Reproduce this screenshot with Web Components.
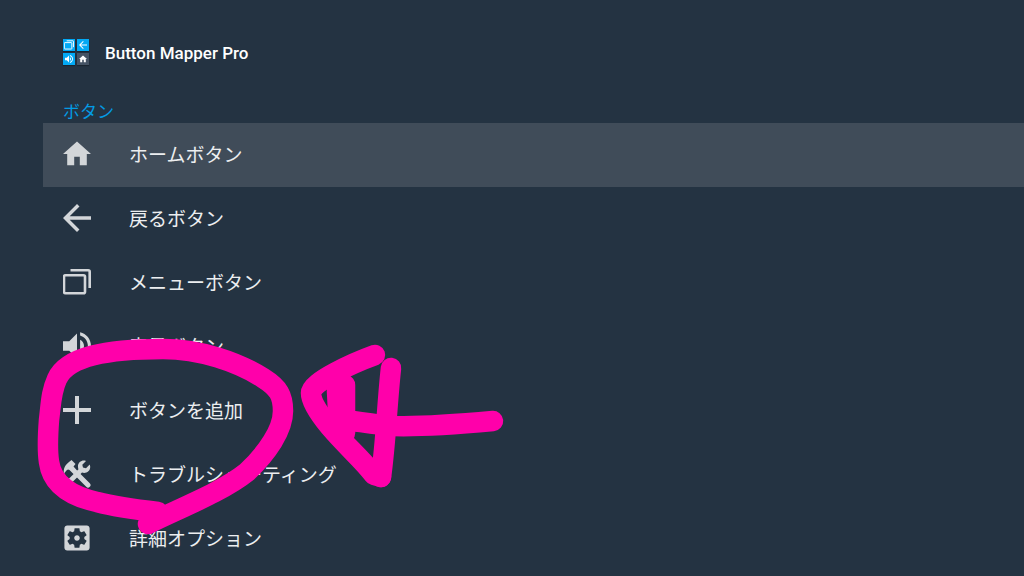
<!DOCTYPE html>
<html lang="ja">
<head>
<meta charset="utf-8">
<meta name="viewport" content="width=device-width, initial-scale=1">
<title>Button Mapper Pro</title>
<style>
    body {
        margin: 0;
        min-height: 100vh;
        background: #243342;
        color: #eceef0;
        font-family: Roboto, "Noto Sans CJK JP", sans-serif;
    }
</style>
</head>
<body>
<mapper-screen>
    <mapper-header slot="header">Button Mapper Pro</mapper-header>
    <menu-section label="ボタン">
        <menu-row icon="home" active>ホームボタン</menu-row>
        <menu-row icon="back">戻るボタン</menu-row>
        <menu-row icon="recent">メニューボタン</menu-row>
        <menu-row icon="volume">音量ボタン</menu-row>
        <menu-row icon="add">ボタンを追加</menu-row>
        <menu-row icon="tools">トラブルシューティング</menu-row>
        <menu-row icon="settings">詳細オプション</menu-row>
    </menu-section>
    <pen-marks slot="overlay"></pen-marks>
</mapper-screen>

<script>
const ICONS = {
    home: ['2 2 20 20', '<path d="M10 20v-6h4v6h5v-8h3L12 3 2 12h3v8z"/>'],
    back: ['4 4 16 16', '<path d="M20 11H7.83l5.59-5.59L12 4l-8 8 8 8 1.41-1.41L7.83 13H20v-2z"/>'],
    recent: ['0 0 28 28', '<g fill="none" stroke="currentColor" stroke-width="2.6"><rect x="1" y="7.3" width="21" height="18" rx="1.5"/><path d="M7.5 2.3H25.2a1.5 1.5 0 0 1 1.5 1.5V20"/></g>'],
    volume: ['3 3 18 18', '<path d="M3 9v6h4l5 5V4L7 9H3zm13.5 3c0-1.77-1.02-3.29-2.5-4.03v8.05c1.48-.73 2.5-2.25 2.5-4.02zM14 3.23v2.06c2.89.86 5 3.54 5 6.71s-2.11 5.85-5 6.71v2.06c4.01-.91 7-4.49 7-8.77s-2.99-7.86-7-8.77z"/>'],
    add: ['5 5 14 14', '<path d="M19 13h-6v6h-2v-6H5v-2h6V5h2v6h6v2z"/>'],
    tools: ['0 0 28 28', '<path d="M1 14C0 9 2 5 6 2L8.5 0l4 4-2 2.5 4 4.5-3.5 3.5L6.5 10 5 9.5c-2 1-3 2.5-4 4.5z"/><path d="M23 1c-4-1.5-8.500 1.500-8 6 0 1 .2 1.700.5 2.300L2 22.500c-2 2 1.500 5.500 3.500 3.500L19 12.500c4 1.500 8.500-1.500 8.200-6l-.5-2-3.700 3.700-3-.7-.7-2.800z"/><path d="M16 16l9 9" fill="none" stroke="currentColor" stroke-width="5" stroke-linecap="round"/>'],
    settings: ['2 2 20 20', '<path d="M12 10c-1.1 0-2 .9-2 2s.9 2 2 2 2-.9 2-2-.9-2-2-2zm7-7H5c-1.11 0-2 .9-2 2v14c0 1.1.89 2 2 2h14c1.11 0 2-.9 2-2V5c0-1.1-.89-2-2-2zm-1.75 9c0 .23-.02.46-.05.68l1.48 1.16c.13.11.17.3.08.45l-1.4 2.42c-.09.15-.27.21-.43.15l-1.74-.7c-.36.28-.76.51-1.18.69l-.26 1.85c-.03.17-.18.3-.35.3h-2.8c-.17 0-.32-.13-.35-.29l-.26-1.85c-.43-.18-.82-.41-1.18-.69l-1.74.7c-.16.06-.34 0-.43-.15l-1.4-2.42c-.09-.15-.05-.34.08-.45l1.48-1.16c-.03-.23-.05-.46-.05-.69 0-.23.02-.46.05-.68l-1.48-1.16c-.13-.11-.17-.3-.08-.45l1.4-2.42c.09-.15.27-.21.43-.15l1.74.7c.36-.28.76-.51 1.18-.69l.26-1.85c.03-.17.18-.3.35-.3h2.8c.17 0 .32.13.35.29l.26 1.85c.43.18.82.41 1.18.69l1.74-.7c.16-.06.34 0 .43.15l1.4 2.42c.09.15.05.34-.08.45l-1.48 1.16c.03.23.05.46.05.69z"/>']
};

class MenuIcon extends HTMLElement {
    constructor() {
        super();
        this.attachShadow({ mode: 'open' });
    }

    connectedCallback() {
        const [viewBox, shape] = ICONS[this.getAttribute('name')];
        this.shadowRoot.innerHTML = `
            <style>
                :host { display: block; width: 28px; height: 28px; flex: none; }
                svg { display: block; width: 100%; height: 100%; fill: currentColor; }
            </style>
            <svg viewBox="${viewBox}" aria-hidden="true">${shape}</svg>
        `;
    }
}
customElements.define('menu-icon', MenuIcon);

class MapperScreen extends HTMLElement {
    constructor() {
        super();
        this.attachShadow({ mode: 'open' }).innerHTML = `
            <style>
                :host { display: block; position: relative; }
                main { padding-left: 43px; }
            </style>
            <main>
                <slot name="header"></slot>
                <slot></slot>
            </main>
            <slot name="overlay"></slot>
        `;
    }
}
customElements.define('mapper-screen', MapperScreen);

class MapperHeader extends HTMLElement {
    constructor() {
        super();
        this.attachShadow({ mode: 'open' }).innerHTML = `
            <style>
                :host { display: block; padding: 37px 20px 34px; }
                header { display: flex; align-items: center; gap: 16px; }
                .logo {
                    display: grid;
                    grid-template-columns: 12px 12px;
                    gap: 2px;
                    color: #fff;
                }
                .logo span {
                    display: grid;
                    place-items: center;
                    height: 12px;
                    background: #03a9f4;
                    box-shadow: 0 1px 1px #0004;
                }
                .logo span:last-child { background: #455364; }
                .logo menu-icon { width: 8px; height: 8px; }
                .logo menu-icon[name="recent"] { width: 10px; height: 10px; }
                h1 {
                    margin: 0;
                    padding-top: 2px;
                    color: #fff;
                    font-size: 17px;
                    line-height: 28px;
                    font-weight: 500;
                }
            </style>
            <header>
                <div class="logo">
                    <span><menu-icon name="recent"></menu-icon></span>
                    <span><menu-icon name="back"></menu-icon></span>
                    <span><menu-icon name="volume"></menu-icon></span>
                    <span><menu-icon name="home"></menu-icon></span>
                </div>
                <h1><slot></slot></h1>
            </header>
        `;
    }
}
customElements.define('mapper-header', MapperHeader);

class MenuSection extends HTMLElement {
    constructor() {
        super();
        this.attachShadow({ mode: 'open' });
    }

    connectedCallback() {
        this.shadowRoot.innerHTML = `
            <style>
                :host { display: block; }
                h2 {
                    margin: 0;
                    padding: 0 20px;
                    color: #039be5;
                    font-size: 17px;
                    line-height: 22px;
                    font-weight: 400;
                }
            </style>
            <h2>${this.getAttribute('label')}</h2>
            <nav><slot></slot></nav>
        `;
    }
}
customElements.define('menu-section', MenuSection);

class MenuRow extends HTMLElement {
    constructor() {
        super();
        this.attachShadow({ mode: 'open' });
    }

    connectedCallback() {
        this.shadowRoot.innerHTML = `
            <style>
                :host { display: block; }
                :host([active]) button { background: #404c59; }
                button {
                    display: flex;
                    align-items: center;
                    gap: 38px;
                    width: 100%;
                    height: 64px;
                    padding: 0 20px 2px;
                    border: 0;
                    background: none;
                    color: inherit;
                    font: inherit;
                    font-size: 19px;
                    line-height: 28px;
                    text-align: left;
                }
                menu-icon { color: #d3d6d9; }
                span { padding-top: 4px; }
            </style>
            <button type="button">
                <menu-icon name="${this.getAttribute('icon')}"></menu-icon>
                <span><slot></slot></span>
            </button>
        `;
    }
}
customElements.define('menu-row', MenuRow);

// Freehand circle round "add button" and the arrow that points at it
class PenMarks extends HTMLElement {
    constructor() {
        super();
        this.attachShadow({ mode: 'open' }).innerHTML = `
            <style>
                :host { position: absolute; top: 0; left: 0; pointer-events: none; }
                svg {
                    display: block;
                    fill: none;
                    stroke: #ff00aa;
                    stroke-width: 20.5;
                    stroke-linecap: round;
                    stroke-linejoin: round;
                }
            </style>
            <svg width="512" height="560" viewBox="0 0 512 560" aria-hidden="true">
                <path d="M158 512C140 510 112 506 97 502C70 496 52 484 49 462C47 449 48 433 49 420C51 404 51 392 57 379C67 357 105 349 163 349C200 349 238 362 263 378C279 388 283 396 283 411C283 430 267 453 247 472C222 492 180 508 148 524"/>
                <path d="M493 421C460 424 425 427 393 426C377 425 361 422 345 420"/>
                <path d="M391 368C387 404 386 441 381 477"/>
                <path d="M375 355C353 363 311 382 311 393C311 402 320 415 330 427C347 447 363 460 374 475L381 477"/>
                <path d="M337 391L345 385V433L338 410Z"/>
            </svg>
        `;
    }
}
customElements.define('pen-marks', PenMarks);
</script>
</body>
</html>
